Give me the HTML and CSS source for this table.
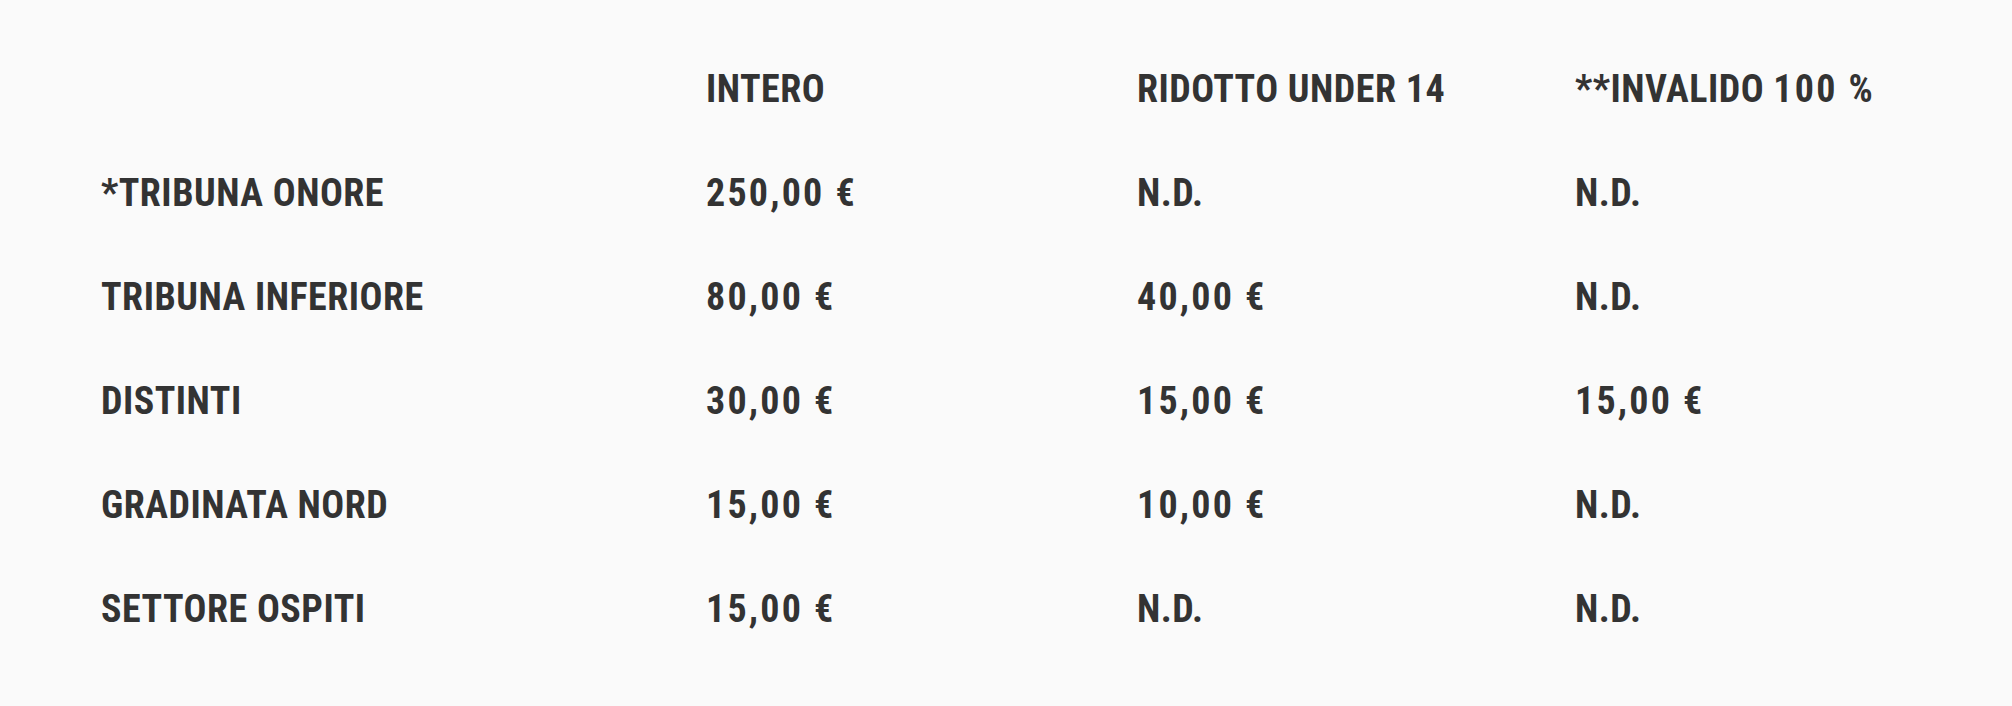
FILE: index.html
```html
<!DOCTYPE html>
<html lang="it">
<head>
<meta charset="utf-8">
<link rel="stylesheet" href="styles.css">
</head>
<body>
<div class="prices">
  <div class="row head">
    <div class="cell"></div>
    <div class="cell">INTERO</div>
    <div class="cell">RIDOTTO UNDER 14</div>
    <div class="cell">**INVALIDO <span class="num">100 %</span></div>
  </div>
  <div class="row">
    <div class="cell">*TRIBUNA ONORE</div>
    <div class="cell num">250,00 €</div>
    <div class="cell">N.D.</div>
    <div class="cell">N.D.</div>
  </div>
  <div class="row">
    <div class="cell">TRIBUNA INFERIORE</div>
    <div class="cell num">80,00 €</div>
    <div class="cell num">40,00 €</div>
    <div class="cell">N.D.</div>
  </div>
  <div class="row">
    <div class="cell">DISTINTI</div>
    <div class="cell num">30,00 €</div>
    <div class="cell num">15,00 €</div>
    <div class="cell num">15,00 €</div>
  </div>
  <div class="row">
    <div class="cell">GRADINATA NORD</div>
    <div class="cell num">15,00 €</div>
    <div class="cell num">10,00 €</div>
    <div class="cell">N.D.</div>
  </div>
  <div class="row">
    <div class="cell">SETTORE OSPITI</div>
    <div class="cell num">15,00 €</div>
    <div class="cell">N.D.</div>
    <div class="cell">N.D.</div>
  </div>
</div>
</body>
</html>
```
FILE: styles.css
```css
html, body {
  margin: 0;
  padding: 0;
  background: #fafafa;
}
body {
  color: #333333;
  font-family: "Roboto Condensed", "DejaVu Sans Condensed", "Liberation Sans", sans-serif;
  font-weight: 700;
  font-size: 38px;
  letter-spacing: 0.5px;
}
.prices {
  padding: 37px 0 0 101px;
}
.row {
  display: grid;
  grid-template-columns: 605px 431px 438px 1fr;
  height: 104px;
  line-height: 104px;
}
.cell {
  white-space: nowrap;
}
.num {
  letter-spacing: 2.2px;
}
```
